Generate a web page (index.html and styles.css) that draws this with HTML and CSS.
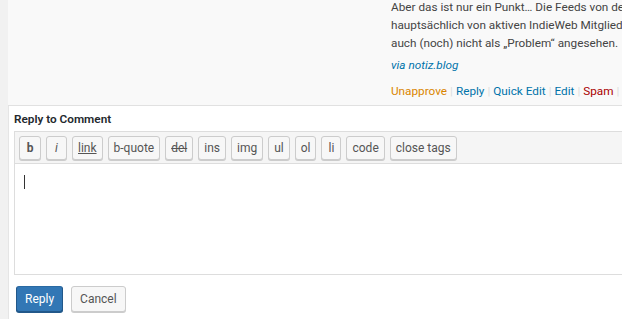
FILE: index.html
```html
<!DOCTYPE html>
<html lang="de">
<head>
    <meta charset="UTF-8">
    <meta name="viewport" content="width=device-width, initial-scale=1.0">
    <title>Kommentare</title>
    <link rel="stylesheet" href="styles.css">
</head>
<body>
    <div class="wrap">
        <div class="comment-row">
            <div class="author-col"></div>
            <div class="comment-col">
                <p class="comment-text">Aber das ist nur ein Punkt… Die Feeds von denen ich spreche, werden<br>hauptsächlich von aktiven IndieWeb Mitgliedern genutzt und werden<br>auch (noch) nicht als „Problem“ angesehen.</p>
                <p class="via"><a href="#">via notiz.blog</a></p>
                <div class="row-actions">
                    <a href="#" class="unapprove">Unapprove</a><span class="sep">|</span><a href="#">Reply</a><span class="sep">|</span><a href="#">Quick Edit</a><span class="sep">|</span><a href="#">Edit</a><span class="sep">|</span><a href="#" class="spam">Spam</a><span class="sep">|</span><a href="#" class="spam">Trash</a>
                </div>
            </div>
        </div>

        <div class="reply-panel">
            <h3 class="reply-head">Reply to Comment</h3>
            <div class="editor">
                <div class="toolbar">
                    <button type="button" class="qt qt-b">b</button>
                    <button type="button" class="qt qt-i">i</button>
                    <button type="button" class="qt qt-link">link</button>
                    <button type="button" class="qt">b-quote</button>
                    <button type="button" class="qt qt-del">del</button>
                    <button type="button" class="qt">ins</button>
                    <button type="button" class="qt">img</button>
                    <button type="button" class="qt">ul</button>
                    <button type="button" class="qt">ol</button>
                    <button type="button" class="qt">li</button>
                    <button type="button" class="qt">code</button>
                    <button type="button" class="qt">close tags</button>
                </div>
                <div class="reply-text">
                    <span class="caret"></span>
                </div>
            </div>
            <div class="reply-submit">
                <button type="button" class="btn btn-primary">Reply</button>
                <button type="button" class="btn">Cancel</button>
            </div>
        </div>
    </div>
</body>
</html>
```

FILE: styles.css
```css
* {
    margin: 0;
    padding: 0;
    box-sizing: border-box;
}

html, body {
    overflow: hidden;
}

body {
    background-color: #f1f1f1;
    font-family: Roboto, "Noto Sans", Arial, sans-serif;
    font-size: 11.75px;
    color: #444;
}

.wrap {
    width: 1000px;
    padding-left: 8px;
}

a {
    color: #0073aa;
    text-decoration: none;
}

.comment-row {
    display: grid;
    grid-template-columns: 383px 1fr;
    height: 106px;
    background-color: #f9f9f9;
    border-bottom: 1px solid #e1e1e1;
    overflow: hidden;
}

.comment-col {
    margin-top: -2px;
}

.comment-text {
    line-height: 18px;
    white-space: nowrap;
}

.via {
    margin-top: 4px;
    line-height: 18px;
    font-style: italic;
}

.row-actions {
    margin-top: 8px;
    line-height: 18px;
    white-space: nowrap;
}

.row-actions .unapprove {
    color: #d98500;
}

.row-actions .spam {
    color: #a00;
}

.row-actions .sep {
    color: #ddd;
    margin: 0 3px;
}

.reply-panel {
    background-color: #fff;
    border-left: 1px solid #e5e5e5;
    padding: 4px 0 10px 5px;
    height: 213px;
}

.reply-head {
    font-size: 11.75px;
    font-weight: 600;
    line-height: 18px;
    color: #23282d;
    margin-bottom: 3px;
}

.editor {
    border: 1px solid #ddd;
}

.toolbar {
    display: flex;
    gap: 5px;
    padding: 4px 4px 3px;
    background-color: #f5f5f5;
    border-bottom: 1px solid #ddd;
}

.qt {
    height: 24px;
    min-width: 20px;
    padding: 0 5px;
    font-family: Roboto, "Noto Sans", Arial, sans-serif;
    font-size: 12px;
    color: #555;
    background-color: #f7f7f7;
    border: 1px solid #ccc;
    border-radius: 3px;
    box-shadow: 0 1px 0 #ccc;
    cursor: pointer;
}

.qt-b {
    font-weight: bold;
    min-width: 22px;
}

.qt-i {
    font-style: italic;
    min-width: 21px;
}

.qt-link {
    text-decoration: underline;
}

.qt-del {
    text-decoration: line-through;
}

.reply-text {
    height: 110px;
    padding: 11px 9px;
}

.caret {
    display: block;
    width: 1px;
    height: 14px;
    background-color: #333;
}

.reply-submit {
    display: flex;
    gap: 8px;
    padding: 11px 0 0 2px;
}

.btn {
    height: 26px;
    padding: 0 8px;
    font-family: Roboto, "Noto Sans", Arial, sans-serif;
    font-size: 12px;
    color: #555;
    background-color: #f7f7f7;
    border: 1px solid #ccc;
    border-radius: 3px;
    box-shadow: 0 1px 0 #ccc;
    cursor: pointer;
}

.btn-primary {
    color: #fff;
    background-color: #3277b5;
    border-color: #2a6aa3 #22588a #22588a;
    box-shadow: 0 1px 0 #22588a;
}
```
